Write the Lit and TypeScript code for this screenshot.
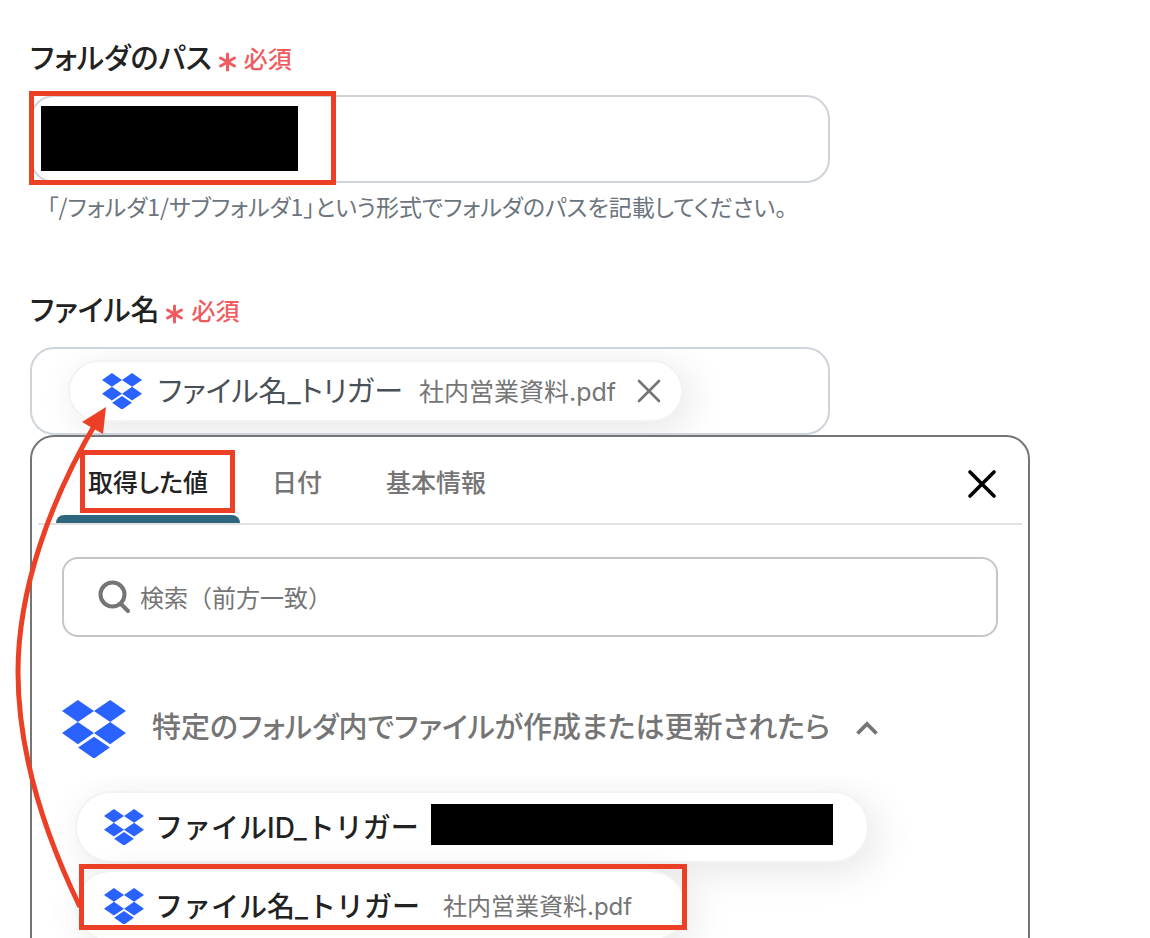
import { LitElement, html, css, svg } from "lit";
import { customElement, property, state } from "lit/decorators.js";

@customElement("dropbox-logo")
class DropboxLogo extends LitElement {
  static styles = css`
    :host { display: block; flex: none; width: 40px; }
    :host([large]) { width: 64px; }
    svg { display: block; width: 100%; }
  `;
  render() {
    return html`<svg viewBox="0 0 190 174" fill="#2962ff" aria-hidden="true">
      <path d="M0 33 47 0 95 33 47 65ZM95 33 143 0 190 33 143 65ZM0 98 47 65 95 98 47 131ZM95 98 143 65 190 98 143 131ZM48 141 95 109 142 141 95 174Z"/>
    </svg>`;
  }
}

@customElement("field-label")
class FieldLabel extends LitElement {
  @property() text = "";
  static styles = css`
    :host { display: flex; align-items: center; gap: 7px; height: 40px; }
    .text { padding-top: 2px; font-size: 29px; font-weight: 500; line-height: 40px; color: #222; font-feature-settings: "palt"; }
    .required { display: flex; align-items: center; gap: 8px; padding-top: 4px; font-size: 24px; font-weight: 500; line-height: 40px; color: #ef5b60; }
    .star { width: 17px; height: 20px; margin-top: 4px; }
  `;
  render() {
    return html`<span class="text">${this.text}</span>
      <span class="required">
        <svg class="star" viewBox="0 0 17 20" fill="none" stroke="currentColor" stroke-width="3" stroke-linecap="round" aria-hidden="true">
          <path d="M8.5 2V18M1.6 6 15.4 14M15.4 6 1.6 14"/>
        </svg>必須</span>`;
  }
}

@customElement("app-root")
class AppRoot extends LitElement {
  @state() tab = 0;
  tabs = ["取得した値", "日付", "基本情報"];

  static styles = css`
    :host {
      display: block;
      font-family: Inter, "Noto Sans CJK JP", sans-serif;
      color: #222;
      background: #fff;
    }
    * { box-sizing: border-box; }
    button, input { font: inherit; color: inherit; background: none; border: 0; padding: 0; margin: 0; }
    button { cursor: pointer; }
    .page { position: relative; height: 100vh; overflow: hidden; padding: 38px 120px 0 30px; }
    .field { max-width: 800px; }
    .control { position: relative; margin-top: 17px; }
    .input {
      display: block; width: 100%; height: 88px; padding: 0 24px;
      border: 2px solid #ced4da; border-radius: 24px; font-size: 24px;
    }
    .redacted { display: block; background: #000; }
    .over-input { position: absolute; left: 11px; top: 11px; width: 257px; height: 65px; }
    .help {
      margin: 7px 0 68px 17px; font-family: "Noto Sans CJK JP", sans-serif;
      font-size: 23px; line-height: 32px; color: #6c757d; font-feature-settings: "palt";
    }
    .token-box {
      display: flex; align-items: center; height: 88px; margin-top: 17px; padding: 0 36px;
      border: 2px solid #ced4da; border-radius: 24px; overflow: hidden;
    }
    .chip {
      display: flex; align-items: center; width: fit-content;
      border: 2px solid #f3f3f3; background: #fff; background-clip: padding-box;
      border-radius: 36px; box-shadow: 8px 8px 40px rgba(0, 0, 0, 0.1);
    }
    .token { height: 62px; padding: 0 20px 0 32px; gap: 16px; color: #495057; }
    .token .name { font-size: 29px; font-feature-settings: "palt"; }
    .token .value { font-size: 25px; }
    .name { padding-top: 2px; font-size: 28px; line-height: 40px; white-space: nowrap; }
    .value { padding-top: 2px; font-size: 24px; line-height: 40px; color: #757575; white-space: nowrap; }
    .remove { display: flex; margin-left: 5px; color: #757575; }
    .panel { height: 600px; border: 2px solid #757575; border-radius: 24px 24px 0 0; background: #fff; }
    .tabs {
      display: flex; align-items: stretch; height: 88px; margin: 0 6px; padding: 0 25px 0 18px;
      border-bottom: 2px solid #e3e3e3;
    }
    .tab {
      height: 86px; padding: 10px 32px 0; border-bottom: 8px solid transparent;
      font-size: 25px; font-weight: 500; font-feature-settings: "palt"; color: #757575; white-space: nowrap;
    }
    .tab[aria-selected="true"] { color: #222; }
    .tab-cell { position: relative; display: flex; }
    .marker { position: absolute; left: 0; right: 0; bottom: 0; height: 8px; border-radius: 8px 8px 0 0; background: #2d667e; }
    .close { display: flex; align-items: center; margin-left: auto; padding-top: 8px; color: #000; }
    .search {
      display: flex; align-items: center; gap: 8px; height: 80px; margin: 32px 30px 0; padding: 0 34px;
      border: 2px solid #c6c6c6; border-radius: 16px; color: #757575;
    }
    .search-input { flex: 1; min-width: 0; height: 76px; padding-top: 2px; font-size: 24px; outline: none; }
    .search-input::placeholder { color: #757575; opacity: 1; }
    .group { display: flex; align-items: center; gap: 26px; height: 60px; margin: 62px 30px 0; color: #757575; }
    .group-name { padding-bottom: 2px; font-size: 29px; font-weight: 500; line-height: 40px; font-feature-settings: "palt"; white-space: nowrap; }
    .list {
      display: flex; flex-direction: column; gap: 7px;
      margin: 18px 0 0; padding: 14px 43px 40px; overflow: hidden; list-style: none;
    }
    .choice { height: 72px; padding: 0 34px 0 27px; gap: 11px; }
    .choice .name { font-weight: 500; }
    .choice .value { margin: 0 18px 0 12px; }
    .choice-redacted { width: 402px; height: 41px; margin: 0 0 5px 1px; }
    .notes { position: absolute; left: 0; top: 0; width: 1150px; height: 938px; pointer-events: none; }
  `;

  render() {
    return html`<main class="page">
      <section class="field">
        <field-label id="path-label" text="フォルダのパス"></field-label>
        <div class="control">
          <input class="input" type="text" aria-labelledby="path-label" aria-describedby="path-help">
          <span class="redacted over-input"></span>
        </div>
        <p class="help" id="path-help">「/フォルダ1/サブフォルダ1」という形式でフォルダのパスを記載してください。</p>
      </section>
      <section class="field">
        <field-label text="ファイル名"></field-label>
        <div class="token-box">
          <div class="chip token">
            <dropbox-logo></dropbox-logo>
            <span class="name">ファイル名_トリガー</span>
            <span class="value">社内営業資料.pdf</span>
            <button class="remove" aria-label="削除">
              <svg width="24" height="24" viewBox="0 0 24 24" fill="none" stroke="currentColor" stroke-width="2.6" stroke-linecap="round"><path d="M2 2 22 22M22 2 2 22"/></svg>
            </button>
          </div>
        </div>
      </section>
      <section class="panel">
        <div class="tabs" role="tablist">
          ${this.tabs.map((t, i) => html`<div class="tab-cell" role="presentation">
            <button class="tab" role="tab" aria-selected=${i === this.tab ? "true" : "false"} @click=${() => (this.tab = i)}>${t}</button>
            ${i === this.tab ? html`<span class="marker"></span>` : ""}
          </div>`)}
          <button class="close" aria-label="閉じる">
            <svg width="30" height="30" viewBox="0 0 30 30" fill="none" stroke="currentColor" stroke-width="3.6" stroke-linecap="round"><path d="M3 3 27 27M27 3 3 27"/></svg>
          </button>
        </div>
        <label class="search">
          <svg width="34" height="34" viewBox="0 0 34 34" fill="none" stroke="currentColor" stroke-width="4" stroke-linecap="round" aria-hidden="true"><circle cx="14.5" cy="14.5" r="12"/><path d="M23 24 30 31"/></svg>
          <input class="search-input" type="text" placeholder="検索（前方一致）" aria-label="検索">
        </label>
        <div class="group">
          <dropbox-logo large></dropbox-logo>
          <span class="group-name">特定のフォルダ内でファイルが作成または更新されたら</span>
          <button aria-label="折りたたむ">
            <svg width="24" height="16" viewBox="0 0 24 16" fill="none" stroke="currentColor" stroke-width="3.8"><path d="M1.5 14.5 11 5 20.5 14.5"/></svg>
          </button>
        </div>
        <ul class="list">
          <li><button class="chip choice">
            <dropbox-logo></dropbox-logo><span class="name">ファイルID_トリガー</span><span class="redacted choice-redacted"></span>
          </button></li>
          <li><button class="chip choice">
            <dropbox-logo></dropbox-logo><span class="name">ファイル名_トリガー</span><span class="value">社内営業資料.pdf</span>
          </button></li>
        </ul>
      </section>
      <svg class="notes" viewBox="0 0 1150 938" fill="none" stroke="#ec4026" stroke-width="5" aria-hidden="true">
        ${[[29, 91, 307, 94], [80, 450, 155, 63], [79, 864, 608, 66]].map(
          ([x, y, w, h]) => svg`<rect x=${x + 2.5} y=${y + 2.5} width=${w - 5} height=${h - 5} />`
        )}
        <path d="M80 907C50 845 18 760 18 672C18 590 50 500 97 421"/>
        <path d="M106 407 82 422 103 434Z" fill="#ec4026" stroke="none"/>
      </svg>
    </main>`;
  }
}
